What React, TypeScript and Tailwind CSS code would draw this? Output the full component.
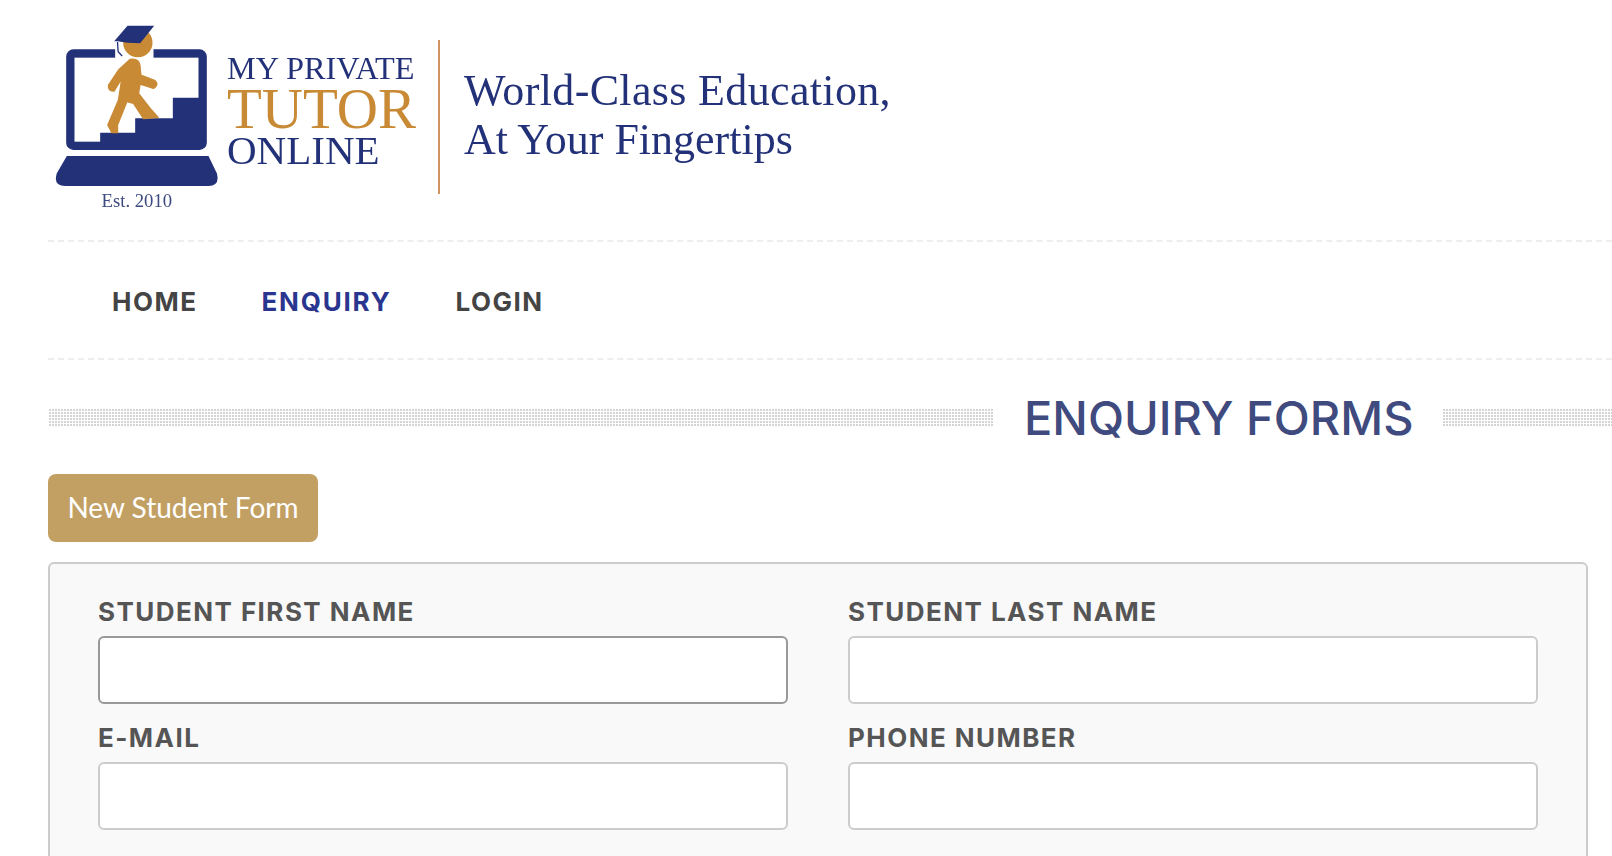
const navy = "#233278";

function Logo() {
  return (
    <svg width="187" height="200" viewBox="0 0 560 600" className="shrink-0 blur-[0.4px]">
      <rect x="78" y="118" width="422" height="302" rx="22" fill={navy} />
      <rect x="103" y="143" width="372" height="252" fill="#fff" />
      <rect x="225" y="105" width="115" height="40" fill="#fff" />
      <polygon points="180,400 180,368 285,368 285,325 398,325 398,263 482,263 482,400" fill={navy} />
      <path d="M80 438H505L530 490Q540 528 505 528H75Q38 528 50 490Z" fill={navy} />
      <circle cx="293" cy="98" r="44" fill="#c98a35" />
      <path d="M270 148Q300 143 300 175L302 195L345 212Q357 225 340 235L300 222L295 250L330 295L354 322L310 326L280 280L260 275L232 345L232 368L215 368L203 345L235 270L245 205L222 243Q203 245 205 225L235 180Z" fill="#c98a35" stroke="#c98a35" strokeWidth="4" strokeLinejoin="round" />
      <polygon points="222,94 262,47 342,47 300,100 262,98 232,94" fill={navy} />
      <path d="M232 96L234 125L246 138" fill="none" stroke={navy} strokeWidth="4" />
      <text x="290" y="592" textAnchor="middle" fontSize="56" fill="#3d4a80" fontFamily="Liberation Serif, serif">Est. 2010</text>
    </svg>
  );
}

function Band({ className }: { className: string }) {
  return (
    <div className={"h-[19px] bg-[linear-gradient(90deg,#ffffff_1px,transparent_1px),linear-gradient(#ffffff_1px,#d4d4d4_1px)] bg-[length:3px_3px] " + className} />
  );
}

function Field({ label, focused }: { label: string; focused?: boolean }) {
  return (
    <div className="flex flex-col">
      <label className="[font-family:Inter,sans-serif] text-[26px] leading-[32px] font-bold tracking-[1.45px] text-[#555555]">{label}</label>
      <input
        type="text"
        className={"mt-[8px] h-[68px] w-full rounded-[6px] border-2 bg-white " + (focused ? "border-[#999999]" : "border-[#cccccc]")}
      />
    </div>
  );
}

export default function App() {
  return (
    <div className="h-[856px] w-full overflow-hidden bg-white">
      <header className="ml-[48px] flex h-[242px] border-b-2 border-dashed border-[#eeeeee] pt-[10px]">
        <div className="-ml-[8px] flex items-start">
          <Logo />
          <div className="mt-[40px] flex w-[211px] flex-col blur-[0.3px] [font-family:'Liberation_Serif',serif]">
            <span className="text-[32.3px] leading-[36px] text-[#233278]">MY PRIVATE</span>
            <span className="text-[57px] leading-[45px] text-[#c98a35]">TUTOR</span>
            <span className="text-[41px] leading-[39px] text-[#233278]">ONLINE</span>
          </div>
          <div className="mt-[30px] h-[154px] w-[2px] bg-[#cf9460]" />
          <div className="mt-[56px] ml-[24px] flex flex-col blur-[0.3px] [font-family:'Liberation_Serif',serif] text-[44px] leading-[49px] text-[#233278]">
            <span className="tracking-[0.35px]">World-Class Education,</span>
            <span>At Your Fingertips</span>
          </div>
        </div>
      </header>

      <nav className="ml-[48px] flex h-[118px] items-center gap-[64px] border-b-2 border-dashed border-[#eeeeee] pt-[2px] pl-[64px] [font-family:Inter,sans-serif] text-[26px] font-bold tracking-[1.5px] text-[#444444]">
        <a>HOME</a>
        <a className="tracking-[1.8px] text-[#2a3590]">ENQUIRY</a>
        <a>LOGIN</a>
      </nav>

      <div className="ml-[48px] flex h-[114px] items-center">
        <Band className="w-[946px]" />
        <h1 className="mr-[28px] ml-[30px] mt-[1px] whitespace-nowrap [font-family:Inter,sans-serif] text-[47px] font-medium leading-none text-[#3f4a7e]">ENQUIRY FORMS</h1>
        <Band className="flex-1" />
      </div>

      <div className="ml-[48px]">
        <button className="flex h-[68px] w-[270px] items-center justify-center rounded-[8px] bg-[#c2a063] pb-[2px] [font-family:Lato,sans-serif] text-[28px] text-white">New Student Form</button>
      </div>

      <section className="mt-[20px] ml-[48px] mr-[24px] rounded-[6px] border-2 border-[#cccccc] bg-[#f9f9f9] px-[48px] pt-[32px] pb-[40px]">
        <div className="grid grid-cols-2 gap-x-[60px] gap-y-[18px]">
          <Field label="STUDENT FIRST NAME" focused />
          <Field label="STUDENT LAST NAME" />
          <Field label="E-MAIL" />
          <Field label="PHONE NUMBER" />
        </div>
      </section>
    </div>
  );
}
